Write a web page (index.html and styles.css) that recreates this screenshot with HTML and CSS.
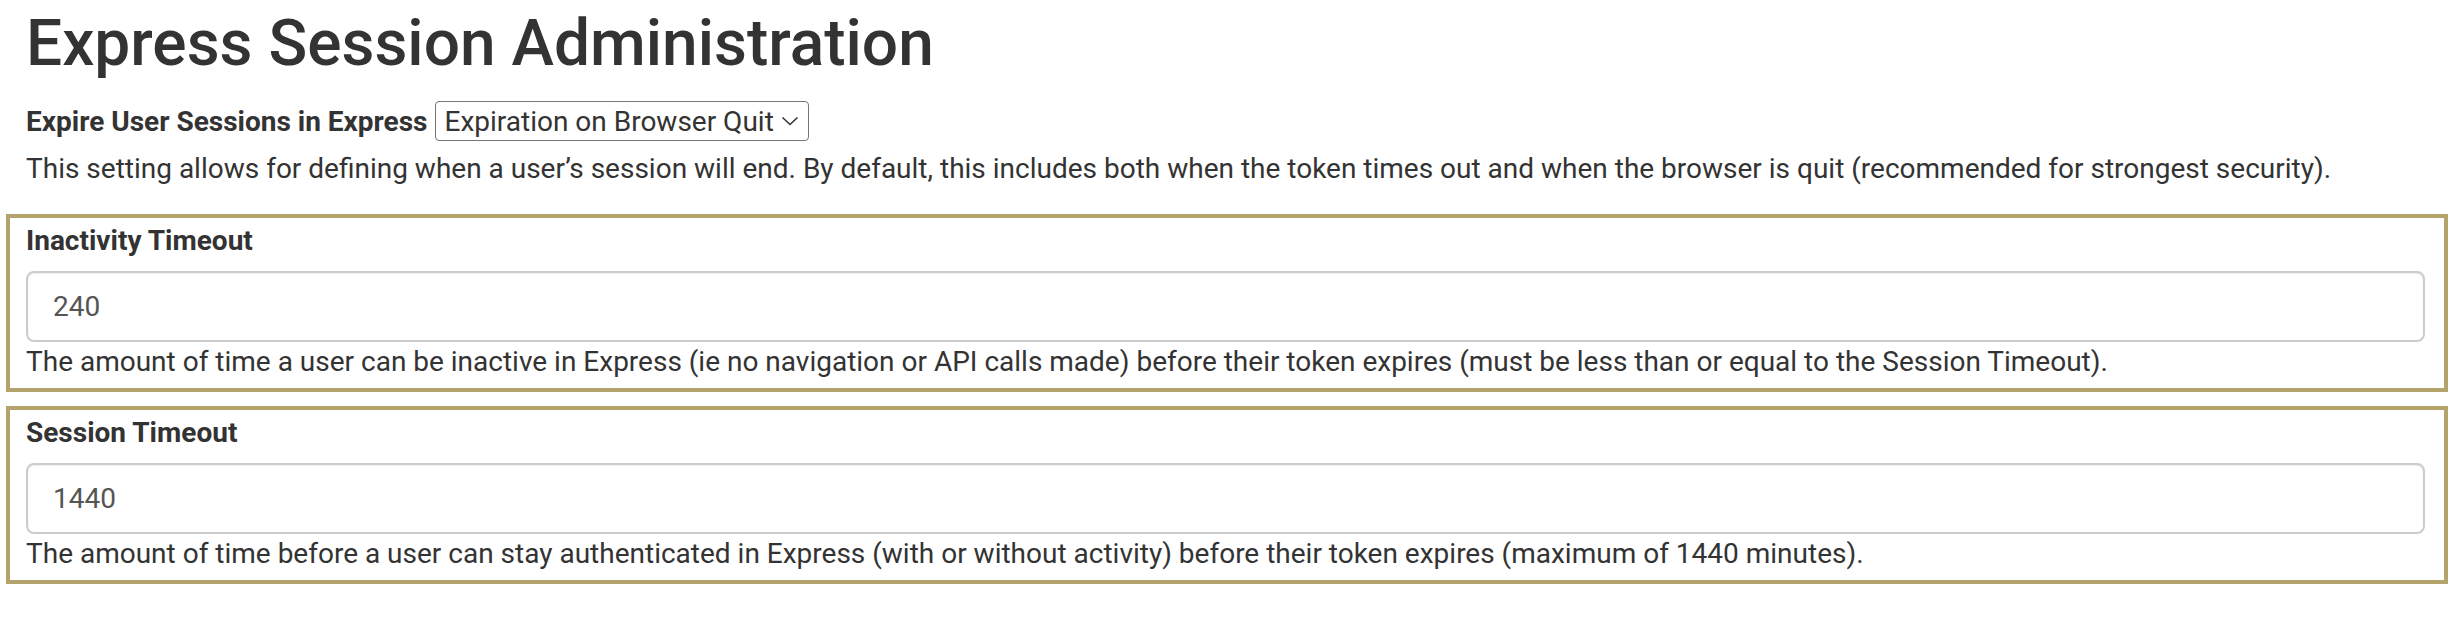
FILE: index.html
```html
<!DOCTYPE html>
<html lang="en">
<head>
    <meta charset="UTF-8">
    <title>Express Session Administration</title>
    <link rel="stylesheet" href="styles.css">
</head>
<body>

    <div class="page">
        <div class="intro">
            <h1>Express Session Administration</h1>

            <div class="expire-row">
                <label for="expire" class="expire-label">Expire User Sessions in Express</label>
                <span class="select-wrap">
                    <select id="expire" class="expire-select">
                        <option>Expiration on Browser Quit</option>
                        <option>Token Timeout Only</option>
                    </select>
                    <svg class="select-arrow" width="18" height="10" viewBox="0 0 18 10">
                        <path d="M1.5 1.5 L9 8.5 L16.5 1.5" fill="none" stroke="#333" stroke-width="1.6"/>
                    </svg>
                </span>
            </div>

            <p class="help">This setting allows for defining when a user’s session will end. By default, this includes both when the token times out and when the browser is quit (recommended for strongest security).</p>
        </div>

        <!-- Inactivity -->
        <div class="field-box">
            <label for="inactivity" class="field-label">Inactivity Timeout</label>
            <input type="text" id="inactivity" class="field-input" value="240">
            <div class="help">The amount of time a user can be inactive in Express (ie no navigation or API calls made) before their token expires (must be less than or equal to the Session Timeout).</div>
        </div>

        <!-- Session -->
        <div class="field-box">
            <label for="session" class="field-label">Session Timeout</label>
            <input type="text" id="session" class="field-input" value="1440">
            <div class="help">The amount of time before a user can stay authenticated in Express (with or without activity) before their token expires (maximum of 1440 minutes).</div>
        </div>
    </div>

</body>
</html>
```

FILE: styles.css
```css
body {
    font-family: Roboto, 'Liberation Sans', sans-serif;
    color: #333;
    background-color: #fff;
    margin: 0;
    padding: 0;
}

.page {
    padding: 0 12px 0 6px;
}

.intro {
    padding: 0 20px;
}

h1 {
    font-size: 64px;
    font-weight: 500;
    line-height: 77px;
    margin: 5px 0 0 0;
}

.expire-row {
    display: flex;
    align-items: center;
    gap: 8px;
    margin-top: 19px;
    height: 40px;
}

.expire-label {
    font-size: 28px;
    font-weight: 700;
}

.select-wrap {
    position: relative;
    display: inline-block;
}

.expire-select {
    appearance: none;
    -webkit-appearance: none;
    font-family: Roboto, 'Liberation Sans', sans-serif;
    font-size: 28px;
    color: #333;
    background-color: #fff;
    border: 1.5px solid #767676;
    border-radius: 4px;
    height: 40px;
    padding: 0 34px 0 8px;
}

.select-arrow {
    position: absolute;
    right: 10px;
    top: 15px;
    pointer-events: none;
}

.help {
    font-size: 28px;
    line-height: 36px;
    margin: 0;
}

.intro .help {
    margin-top: 10px;
    margin-bottom: 27px;
}

.field-box {
    border: 4px solid #b4a46c;
    padding: 5px 16px 8px 16px;
    margin-bottom: 14px;
}

.field-label {
    display: block;
    font-size: 28px;
    font-weight: 700;
    line-height: 36px;
}

.field-input {
    display: block;
    box-sizing: border-box;
    width: calc(100% - 3px);
    height: 71px;
    margin-top: 12px;
    padding: 0 25px;
    font-family: Roboto, 'Liberation Sans', sans-serif;
    font-size: 28px;
    color: #555;
    border: 2px solid #ccc;
    border-radius: 8px;
    box-shadow: inset 0 1px 2px rgba(0, 0, 0, 0.08);
}

.field-box .help {
    margin-top: 2px;
}
```
